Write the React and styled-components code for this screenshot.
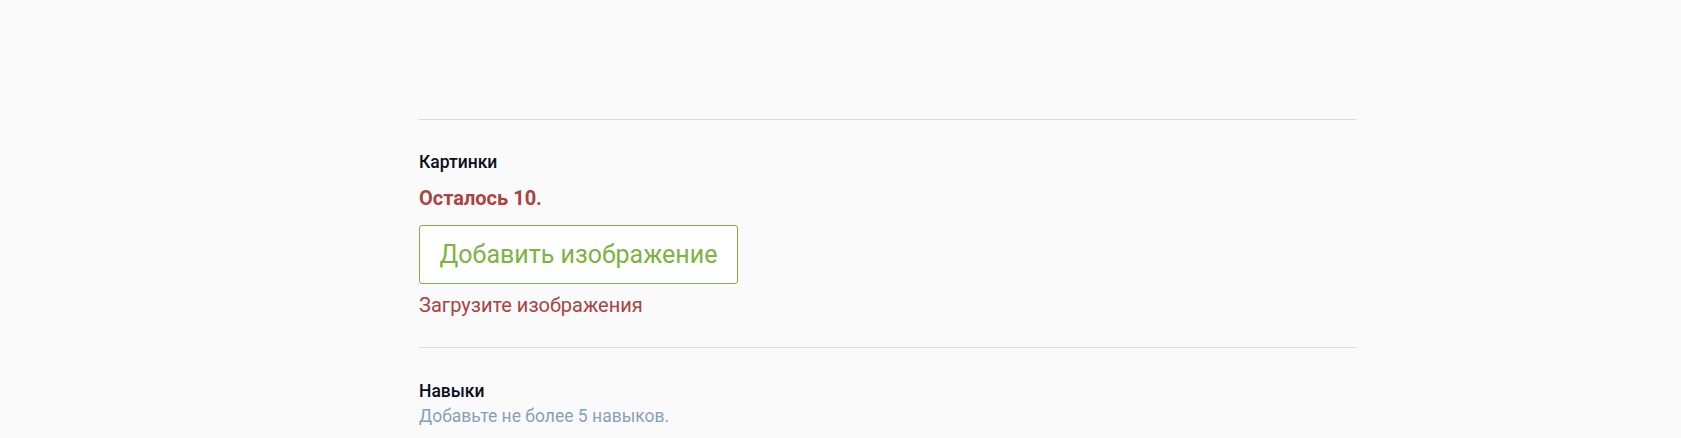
import React from "react";
import styled, { createGlobalStyle } from "styled-components";

const Global = createGlobalStyle`
  html, body { margin: 0; padding: 0; background: #fafafa; }
  body { font-family: Roboto, "Noto Sans", "Liberation Sans", sans-serif; }
`;

const Page = styled.div`
  display: grid;
  grid-template-columns: 419px 937px 1fr;
  padding-top: 119px;
  min-height: 438px;
  box-sizing: border-box;
`;

const Column = styled.div`
  grid-column: 2;
  display: flex;
  flex-direction: column;
`;

const Section = styled.section`
  border-top: 1px solid #dcdcdc;
  padding: ${(p) => (p.$top ? p.$top : 31)}px 0 30px;
  display: flex;
  flex-direction: column;
`;

const Title = styled.h3`
  margin: 0;
  font-size: 17.5px;
  font-weight: 500;
  line-height: 22px;
  color: #0c0d1c;
`;

const Remaining = styled.div`
  margin-top: 13px;
  font-size: 20px;
  font-weight: 700;
  line-height: 24px;
  color: #a94442;
`;

const AddButton = styled.button`
  align-self: flex-start;
  margin-top: 15px;
  width: 319px;
  height: 59px;
  box-sizing: border-box;
  background: #fff;
  border: 1px solid #7cb342;
  border-radius: 3px;
  color: #7cb342;
  font-family: inherit;
  font-size: 25px;
  font-weight: 400;
  padding: 0;
  cursor: pointer;
`;

const ErrorText = styled.div`
  margin-top: 9px;
  font-size: 20px;
  line-height: 24px;
  color: #a94442;
`;

const Hint = styled.div`
  margin-top: 2px;
  font-size: 17.5px;
  line-height: 24px;
  color: #8aa0b6;
`;

export default function App() {
  return (
    <>
      <Global />
      <Page>
        <Column>
          <Section>
            <Title>Картинки</Title>
            <Remaining>Осталось 10.</Remaining>
            <AddButton type="button">Добавить изображение</AddButton>
            <ErrorText>Загрузите изображения</ErrorText>
          </Section>
          <Section $top={32}>
            <Title>Навыки</Title>
            <Hint>Добавьте не более 5 навыков.</Hint>
          </Section>
        </Column>
      </Page>
    </>
  );
}
